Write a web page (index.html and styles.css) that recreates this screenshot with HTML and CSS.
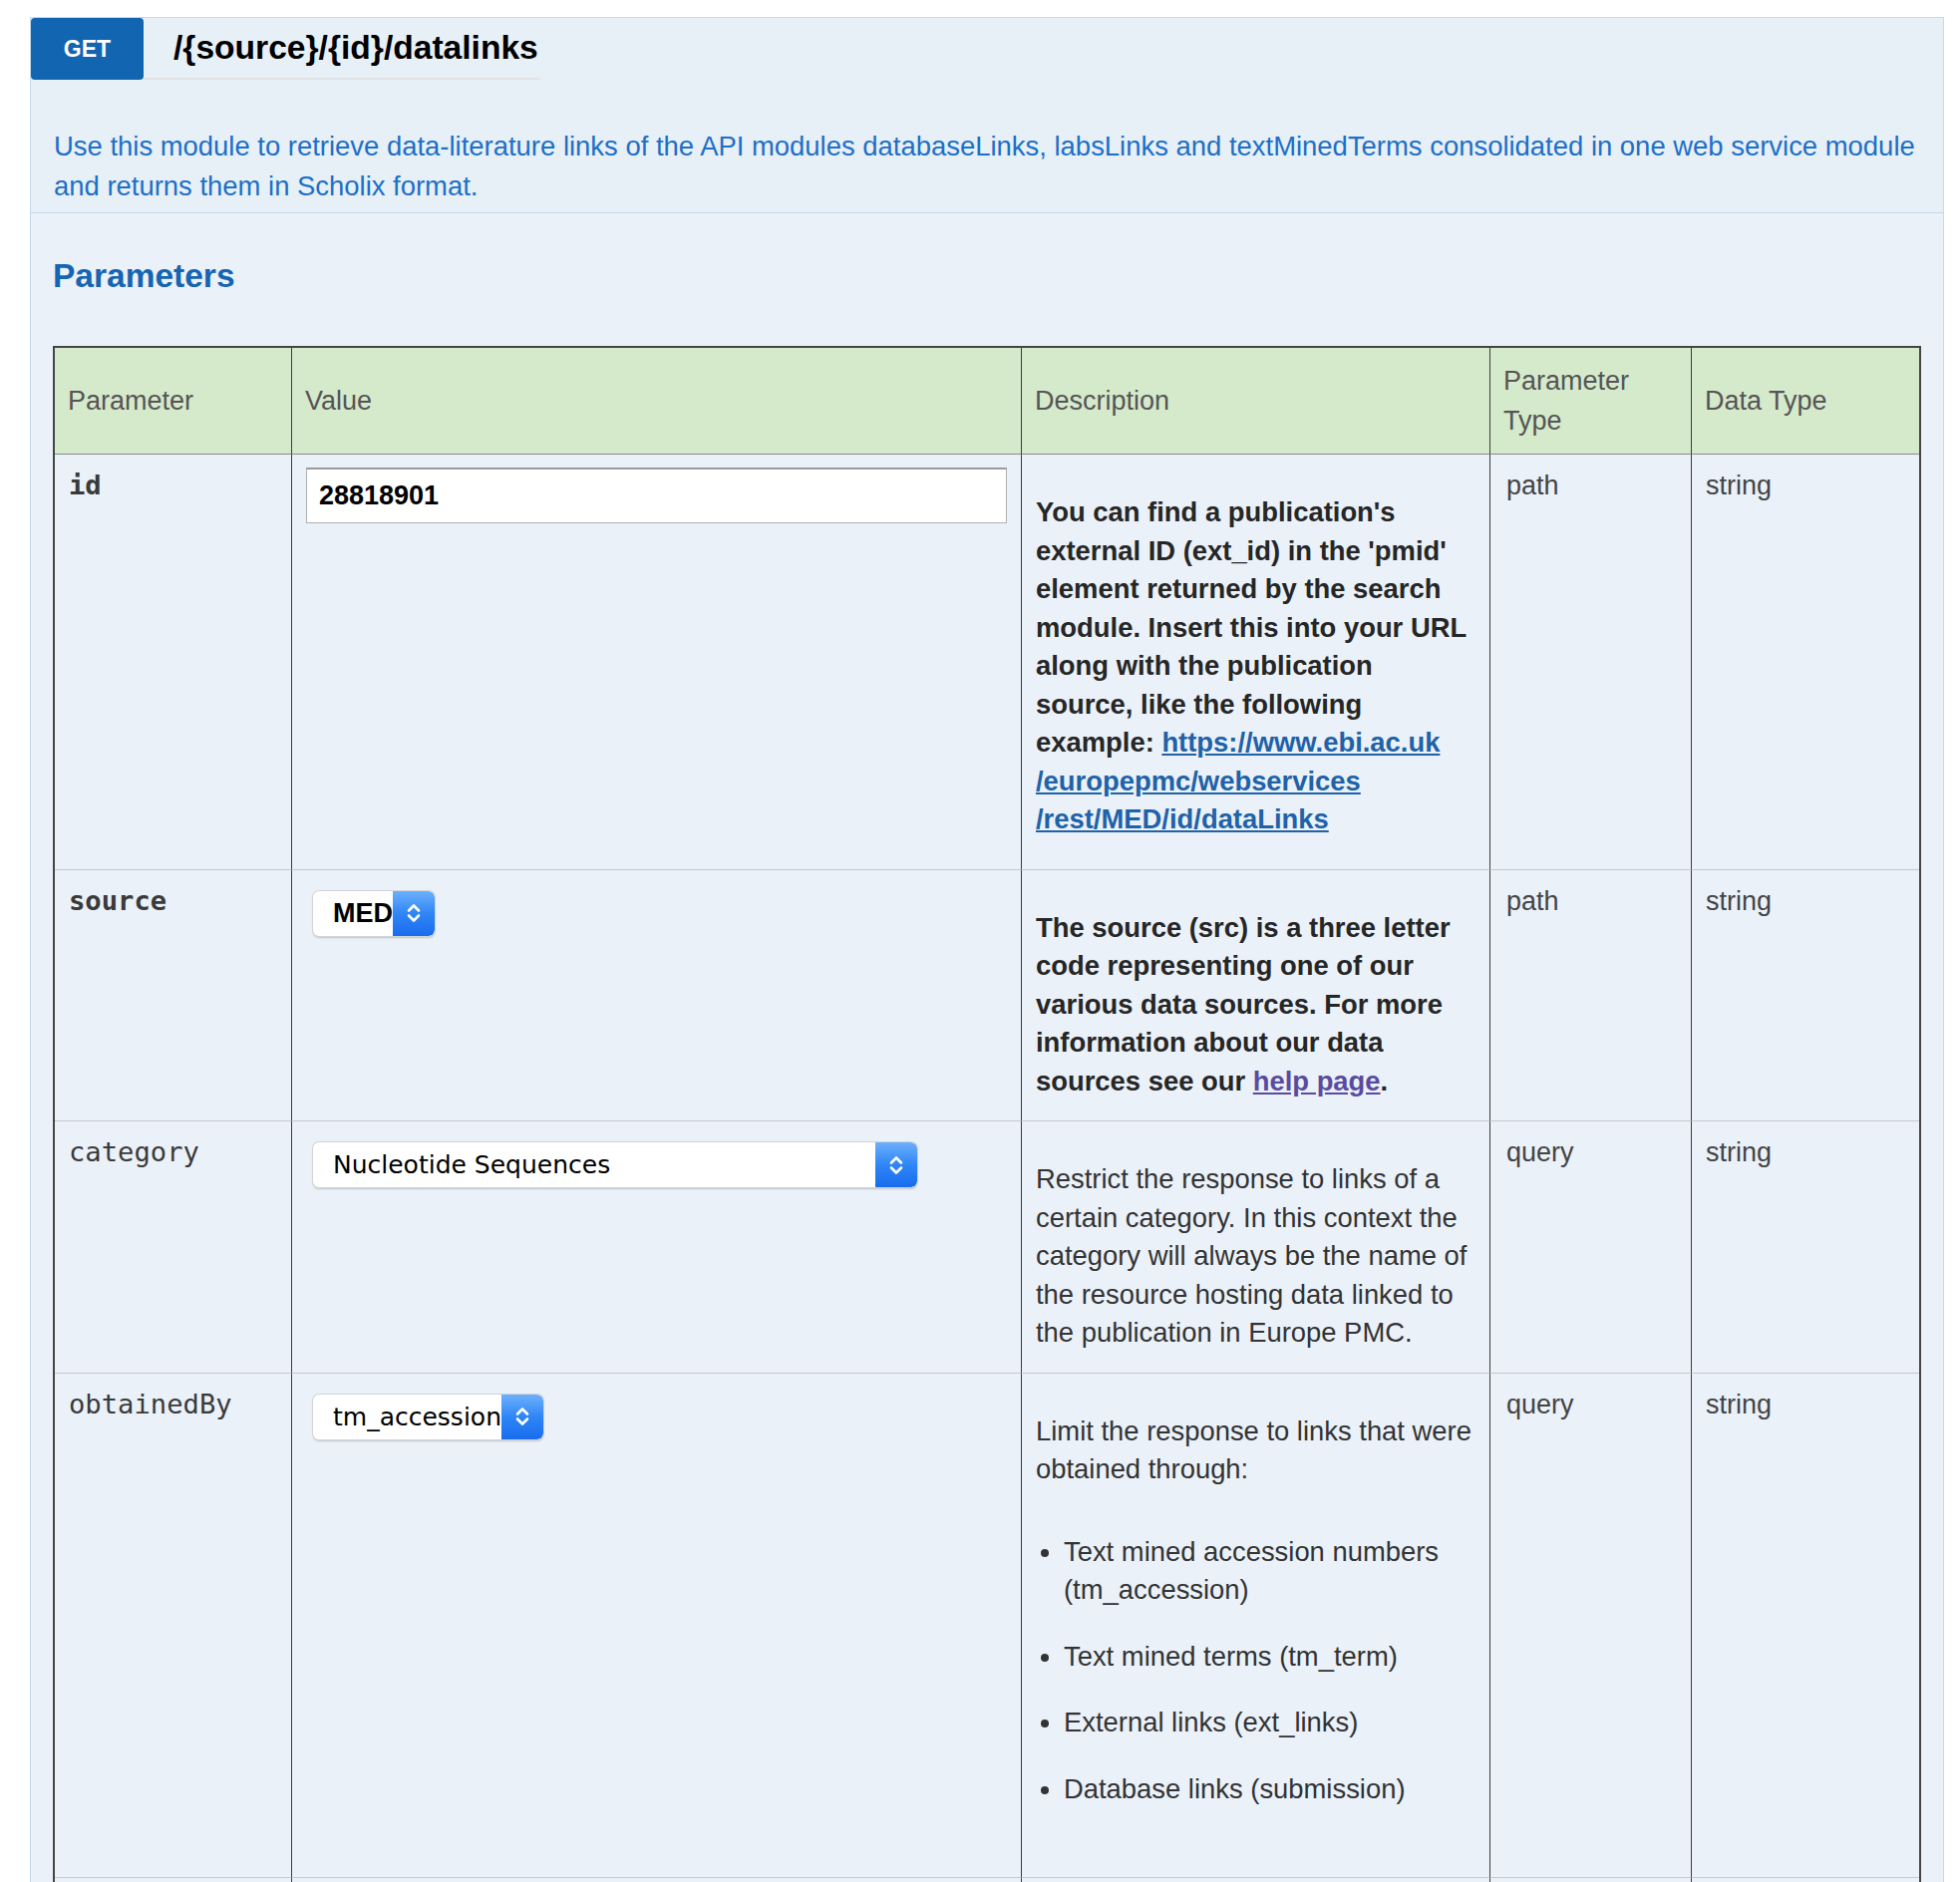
FILE: index.html
```html
<!DOCTYPE html>
<html lang="en">
<head>
<meta charset="utf-8">
<title>/{source}/{id}/datalinks</title>
<link rel="stylesheet" href="styles.css">
</head>
<body>
<div class="panel">
  <div class="op-head">
    <div class="op-title">
      <span class="badge">GET</span>
      <span class="path">/{source}/{id}/datalinks</span>
    </div>
    <p class="op-desc">Use this module to retrieve data-literature links of the API modules databaseLinks, labsLinks and textMinedTerms consolidated in one web service module and returns them in Scholix format.</p>
  </div>
  <div class="op-body">
    <h3 class="params-title">Parameters</h3>
    <table class="params">
      <thead>
        <tr>
          <th class="c-name">Parameter</th>
          <th class="c-value">Value</th>
          <th class="c-desc">Description</th>
          <th class="c-ptype">Parameter Type</th>
          <th class="c-dtype">Data Type</th>
        </tr>
      </thead>
      <tbody>
        <tr>
          <td><code class="pname required">id</code></td>
          <td><input class="text-input" type="text" value="28818901"></td>
          <td><p class="desc strong long">You can find a publication's external ID (ext_id) in the 'pmid' element returned by the search module. Insert this into your URL along with the publication source, like the following example: <a class="link" href="#">https://www.ebi.ac.uk<wbr>/europepmc/webservices<wbr>/rest/MED/id/dataLinks</a></p></td>
          <td class="ptype">path</td>
          <td>string</td>
        </tr>
        <tr>
          <td><code class="pname required">source</code></td>
          <td>
            <span class="select">
              <span class="select-text bold">MED</span>
              <span class="select-arrow"><svg width="16" height="28" viewBox="0 0 16 28"><path d="M3 11.5 L8 6.5 L13 11.5 M3 16.5 L8 21.5 L13 16.5" fill="none" stroke="#fff" stroke-width="2.6" stroke-linecap="round" stroke-linejoin="round"/></svg></span>
            </span>
          </td>
          <td><p class="desc strong">The source (src) is a three letter code representing one of our various data sources. For more information about our data sources see our <a class="link visited" href="#">help page</a>.</p></td>
          <td class="ptype">path</td>
          <td>string</td>
        </tr>
        <tr>
          <td><code class="pname">category</code></td>
          <td>
            <span class="select wide">
              <span class="select-text">Nucleotide Sequences</span>
              <span class="select-arrow"><svg width="16" height="28" viewBox="0 0 16 28"><path d="M3 11.5 L8 6.5 L13 11.5 M3 16.5 L8 21.5 L13 16.5" fill="none" stroke="#fff" stroke-width="2.6" stroke-linecap="round" stroke-linejoin="round"/></svg></span>
            </span>
          </td>
          <td><p class="desc">Restrict the response to links of a certain category. In this context the category will always be the name of the resource hosting data linked to the publication in Europe PMC.</p></td>
          <td class="ptype">query</td>
          <td>string</td>
        </tr>
        <tr>
          <td><code class="pname">obtainedBy</code></td>
          <td>
            <span class="select">
              <span class="select-text">tm_accession</span>
              <span class="select-arrow"><svg width="16" height="28" viewBox="0 0 16 28"><path d="M3 11.5 L8 6.5 L13 11.5 M3 16.5 L8 21.5 L13 16.5" fill="none" stroke="#fff" stroke-width="2.6" stroke-linecap="round" stroke-linejoin="round"/></svg></span>
            </span>
          </td>
          <td>
            <p class="desc intro">Limit the response to links that were obtained through:</p>
            <ul class="desc-list">
              <li>Text mined accession numbers (tm_accession)</li>
              <li>Text mined terms (tm_term)</li>
              <li>External links (ext_links)</li>
              <li>Database links (submission)</li>
            </ul>
          </td>
          <td class="ptype">query</td>
          <td>string</td>
        </tr>
        <tr class="more">
          <td></td>
          <td></td>
          <td></td>
          <td></td>
          <td></td>
        </tr>
      </tbody>
    </table>
  </div>
</div>
</body>
</html>
```

FILE: styles.css
```css
html, body {
  margin: 0;
  background: #ffffff;
}

body {
  padding: 17px 16px 0 30px;
  font-family: "Liberation Sans", Arial, Helvetica, sans-serif;
  color: #333333;
}

.panel {
  box-sizing: border-box;
  width: 1920px;
  border: 1px solid #c5d9ed;
  border-bottom: none;
  background: #e7eff7;
}

.op-head {
  border-bottom: 1px solid #c2d7ec;
}

.op-title {
  display: flex;
  align-items: flex-start;
}

.badge {
  box-sizing: border-box;
  width: 113px;
  height: 62px;
  display: flex;
  align-items: center;
  justify-content: center;
  background: #1265b0;
  color: #ffffff;
  font-weight: bold;
  font-size: 23px;
  border-radius: 4px;
}

.path {
  font-size: 33.6px;
  font-weight: bold;
  color: #000000;
  line-height: 60px;
  padding: 0 2px 0 30px;
  border-bottom: 2px solid #e2e3e4;
}

.op-desc {
  margin: 47px 0 0;
  padding: 0 8px 6px 23px;
  font-size: 27.45px;
  line-height: 40px;
  color: #1d6fc7;
}

.op-body {
  background: #eaf1f9;
  padding: 42px 22px 0;
}

.params-title {
  margin: 0 0 49px;
  font-size: 33.5px;
  line-height: 42px;
  font-weight: bold;
  color: #1565b2;
}

.params {
  width: 1874px;
  border-collapse: separate;
  border-spacing: 0;
  table-layout: fixed;
  border: 2px solid #454545;
  border-bottom: none;
}

.params th,
.params td {
  box-sizing: border-box;
  text-align: left;
  font-size: 27px;
  line-height: 40px;
}

.params th + th,
.params td + td {
  border-left: 1px solid #3c3c3c;
}

.params th {
  padding: 13px 13px;
  background: #d5e9cb;
  color: #555555;
  font-weight: normal;
  vertical-align: middle;
  border-bottom: 1px solid #8a8a8a;
}

.c-name { width: 237px; }
.c-value { width: 732px; }
.c-desc { width: 470px; }
.c-ptype { width: 202px; }
.c-dtype { width: 229px; }

.params td {
  padding: 11px 14px;
  vertical-align: top;
  border-bottom: 1px solid #c6c9cd;
  color: #444444;
}

.params td.ptype {
  padding-left: 16px;
}

.pname {
  font-family: "DejaVu Sans Mono", Menlo, monospace;
  font-size: 27.2px;
  color: #3a3a3a;
}

.pname.required {
  font-weight: bold;
}

.text-input {
  display: block;
  box-sizing: border-box;
  width: 100%;
  height: 56px;
  margin: 2px 0 0;
  padding: 0 12px;
  background: #ffffff;
  border: 1px solid #b0b0b0;
  border-top: 2px solid #9a9a9a;
  border-radius: 0;
  font-family: "Liberation Sans", Arial, sans-serif;
  font-weight: bold;
  font-size: 27px;
  color: #000000;
  outline: none;
}

.select {
  display: inline-flex;
  align-items: stretch;
  height: 45px;
  margin: 10px 0 0 7px;
  background: #ffffff;
  border-radius: 6px;
  box-shadow: 0 0 0 1px #d3d3d3, 0 2px 2px rgba(0, 0, 0, 0.18);
  overflow: hidden;
  vertical-align: top;
}

.select.wide {
  width: 606px;
}

.select-text {
  flex: 1 1 auto;
  padding-left: 20px;
  line-height: 45px;
  font-family: "DejaVu Sans", "Open Sans", sans-serif;
  font-size: 25px;
  color: #000000;
  white-space: nowrap;
}

.select-text.bold {
  font-family: "Liberation Sans", Arial, sans-serif;
  font-weight: bold;
  font-size: 27px;
}

.select-arrow {
  flex: 0 0 42px;
  display: flex;
  align-items: center;
  justify-content: center;
  background: linear-gradient(#6cb0fc, #2f86f6 50%, #186cee);
  border-radius: 0 6px 6px 0;
}

.desc {
  margin: 28px 0 9px;
  font-size: 27.4px;
  line-height: 38.5px;
  color: #333333;
}

.desc.strong {
  font-weight: bold;
  color: #262626;
}

.desc.long {
  margin-bottom: 19px;
}

.desc.intro {
  margin-bottom: 0;
}

.link {
  color: #1f62a8;
  text-decoration: underline;
}

.link.visited {
  color: #5a4ba0;
}

.desc-list {
  margin: 44px 0 58px;
  padding-left: 28px;
  font-size: 27.4px;
  line-height: 38.5px;
  color: #333333;
}

.desc-list li + li {
  margin-top: 28px;
}

.more td {
  height: 60px;
}
```
